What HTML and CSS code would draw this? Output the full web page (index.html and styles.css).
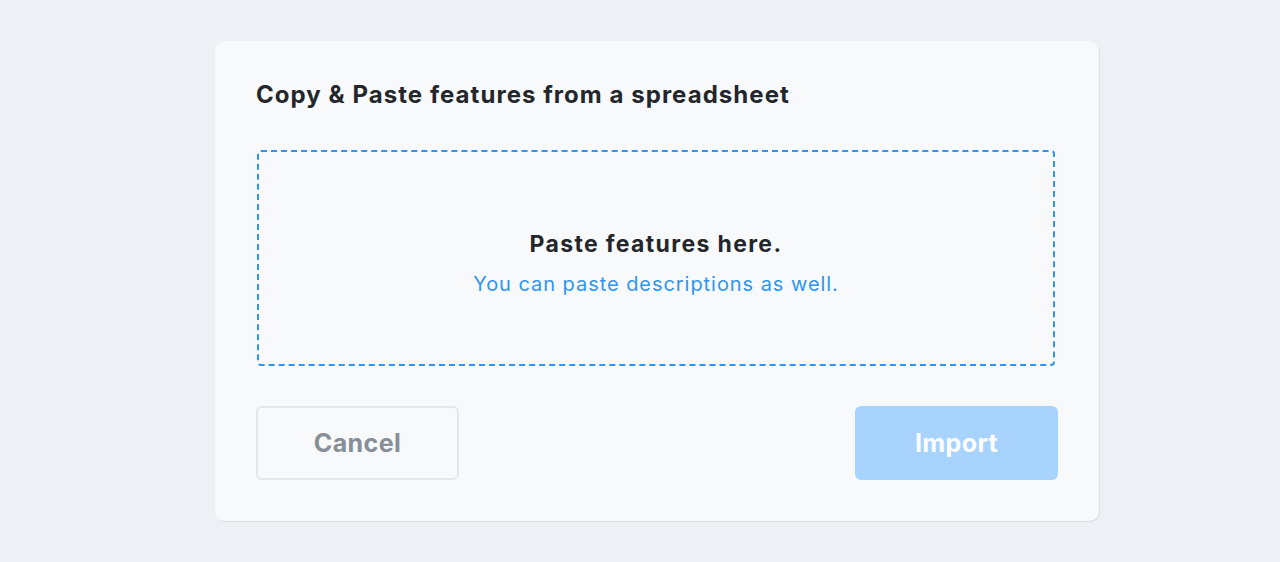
FILE: index.html
```html
<!DOCTYPE html>
<html>
<head>
<meta charset="utf-8">
<link rel="stylesheet" href="styles.css">
</head>
<body>
<div class="page">
  <div class="card">
    <h1 class="title">Copy &amp; Paste features from a spreadsheet</h1>
    <div class="dropzone">
      <div class="drop-title">Paste features here.</div>
      <div class="drop-sub">You can paste descriptions as well.</div>
    </div>
    <div class="actions">
      <button class="btn btn-cancel">Cancel</button>
      <button class="btn btn-import">Import</button>
    </div>
  </div>
</div>
</body>
</html>
```
FILE: styles.css
```css
html, body {
  margin: 0;
  padding: 0;
}
body {
  background: #edf1f5;
  font-family: "Inter", "Open Sans", sans-serif;
  width: 1280px;
  height: 562px;
  overflow: hidden;
}
.page {
  display: flex;
  justify-content: flex-start;
  padding-top: 41px;
  padding-left: 215px;
}
.card {
  width: 884px;
  height: 480px;
  box-sizing: border-box;
  background: #f8f9fb;
  border-radius: 10px;
  box-shadow: 1px 1px 1px rgba(0, 0, 0, 0.08);
  padding: 37px 41px 41px 41px;
  display: flex;
  flex-direction: column;
}
.title {
  margin: 0;
  font-size: 24px;
  font-weight: 700;
  color: #23272b;
  line-height: 34px;
  letter-spacing: 1.05px;
}
.dropzone {
  margin-top: 38px;
  margin-left: 1px;
  margin-right: 3px;
  height: 216px;
  box-sizing: border-box;
  border: 2px dashed #2f95f3;
  border-radius: 4px;
  padding-top: 9px;
  display: flex;
  flex-direction: column;
  align-items: center;
  justify-content: center;
}
.drop-title {
  font-size: 23px;
  font-weight: 700;
  color: #23272b;
  line-height: 30px;
  letter-spacing: 1.35px;
}
.drop-sub {
  margin-top: 12px;
  font-size: 20px;
  color: #2f95f3;
  line-height: 26px;
  letter-spacing: 0.95px;
}
.actions {
  margin-top: 40px;
  display: flex;
  justify-content: space-between;
}
.btn {
  width: 203px;
  height: 74px;
  box-sizing: border-box;
  border-radius: 6px;
  font-family: inherit;
  font-size: 25px;
  font-weight: 700;
  letter-spacing: 0.4px;
  cursor: pointer;
}
.btn-cancel {
  background: transparent;
  border: 2px solid #e4e7ea;
  color: #878e96;
}
.btn-import {
  background: #a8d3fd;
  border: none;
  color: #ffffff;
}
```
